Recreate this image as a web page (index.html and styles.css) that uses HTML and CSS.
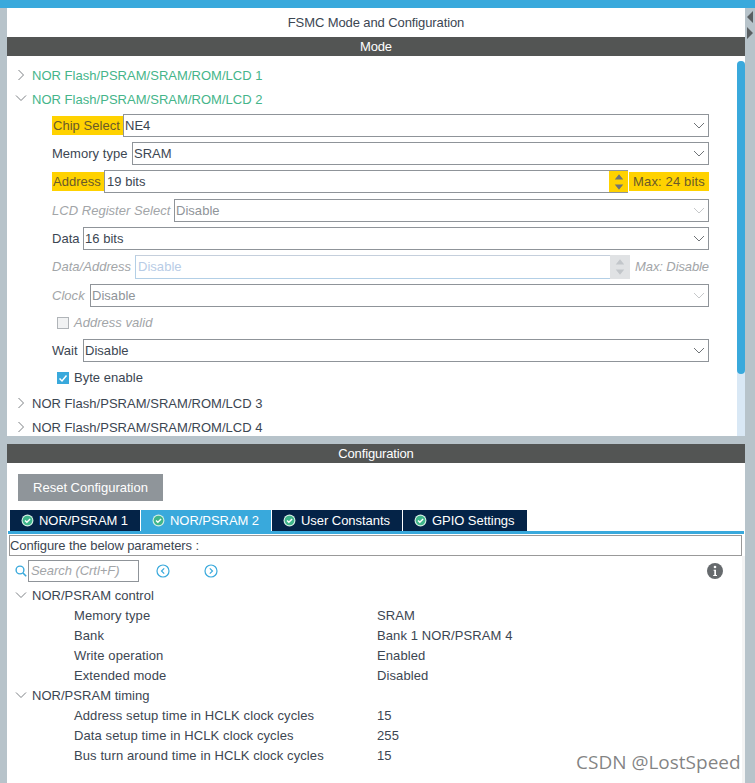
FILE: index.html
```html
<!DOCTYPE html>
<html lang="en">
<head>
<meta charset="utf-8">
<title>FSMC Mode and Configuration</title>
<link rel="stylesheet" href="styles.css">
</head>
<body>
<svg class="defs" width="0" height="0" aria-hidden="true">
  <symbol id="right" viewBox="0 0 8 12"><path d="M1.500 1l5 5-5 5" fill="none" stroke="#7d8185" stroke-width="1"/></symbol>
  <symbol id="down" viewBox="0 0 12 8"><path d="M1 1.500l5 5 5-5" fill="none" stroke="#7d8185" stroke-width="1"/></symbol>
  <symbol id="chev" viewBox="0 0 12 7"><path d="M1 1l5 5 5-5" fill="none" stroke="currentColor" stroke-width="1"/></symbol>
  <symbol id="ok" viewBox="0 0 14 14"><circle cx="7" cy="7" r="6.400" fill="#d5efe4"/><circle cx="7" cy="7" r="5.200" fill="#3fb68b"/><path d="M4.300 7l2 2 3.500-3.600" fill="none" stroke="#fff" stroke-width="1.500"/></symbol>
  <symbol id="spin" viewBox="0 0 12 20"><path d="M6 1l5 6H1zM1 13h10l-5 6z" fill="currentColor"/></symbol>
</svg>
<div class="topbar"></div>
<div class="splitter">
  <svg viewBox="0 0 8 30" width="8" height="30"><path d="M7 2v12L1 8zM1 18v12l6-6z" fill="#5a5f62"/></svg>
</div>
<main class="panel">
  <h1 class="title">FSMC Mode and Configuration</h1>
  <h2 class="bar">Mode</h2>
  <section class="mode">
    <div class="mode-body">
      <div class="node first green"><svg class="arrow-r"><use href="#right"/></svg>NOR Flash/PSRAM/SRAM/ROM/LCD 1</div>
      <div class="node green"><svg class="arrow-d"><use href="#down"/></svg>NOR Flash/PSRAM/SRAM/ROM/LCD 2</div>
      <div class="form">
        <div class="row"><span class="label hl w-chip">Chip Select</span><div class="select"><span class="val">NE4</span><svg class="chev"><use href="#chev"/></svg></div></div>
        <div class="row"><span class="label w-mem">Memory type</span><div class="select"><span class="val">SRAM</span><svg class="chev"><use href="#chev"/></svg></div></div>
        <div class="row"><span class="label hl w-addr">Address</span><div class="input"><span class="val">19 bits</span><div class="spinner hl"><svg class="spin"><use href="#spin"/></svg></div></div><span class="max hl">Max: 24 bits</span></div>
        <div class="row tall"><span class="label off w-lcd">LCD Register Select</span><div class="select"><span class="val off-val">Disable</span><svg class="chev faint"><use href="#chev"/></svg></div></div>
        <div class="row"><span class="label w-data">Data</span><div class="select"><span class="val">16 bits</span><svg class="chev"><use href="#chev"/></svg></div></div>
        <div class="row"><span class="label off w-da">Data/Address</span><div class="input dis"><span class="val dis-val">Disable</span><div class="spinner grey"><svg class="spin"><use href="#spin"/></svg></div></div><span class="max off max-off">Max: Disable</span></div>
        <div class="row tall"><span class="label off w-clk">Clock</span><div class="select"><span class="val off-val">Disable</span><svg class="chev faint"><use href="#chev"/></svg></div></div>
        <div class="check off-check"><span class="box"></span><span class="off">Address valid</span></div>
        <div class="row wait"><span class="label w-data">Wait</span><div class="select"><span class="val">Disable</span><svg class="chev"><use href="#chev"/></svg></div></div>
        <div class="check on-check"><span class="box on"><svg viewBox="0 0 12 12" width="12" height="12"><path d="M2.500 6.500l2.500 2.500 4.500-5.500" fill="none" stroke="#fff" stroke-width="1.500"/></svg></span><span>Byte enable</span></div>
      </div>
      <div class="node n3"><svg class="arrow-r"><use href="#right"/></svg>NOR Flash/PSRAM/SRAM/ROM/LCD 3</div>
      <div class="node"><svg class="arrow-r"><use href="#right"/></svg>NOR Flash/PSRAM/SRAM/ROM/LCD 4</div>
    </div>
    <div class="scrollbar"><div class="thumb"></div></div>
  </section>
  <div class="gap"></div>
  <h2 class="bar">Configuration</h2>
  <section class="config">
    <button class="reset" type="button">Reset Configuration</button>
    <div class="tabs">
      <div class="tab t1"><svg class="ok"><use href="#ok"/></svg>NOR/PSRAM 1</div>
      <div class="tab t1 active"><svg class="ok"><use href="#ok"/></svg>NOR/PSRAM 2</div>
      <div class="tab t1"><svg class="ok"><use href="#ok"/></svg>User Constants</div>
      <div class="tab t4"><svg class="ok"><use href="#ok"/></svg>GPIO Settings</div>
    </div>
    <div class="tabline"></div>
    <div class="params">Configure the below parameters :</div>
    <div class="tabbody">
      <div class="search">
        <svg class="mag" viewBox="0 0 12 12" width="12" height="12"><circle cx="5" cy="5" r="3.900" fill="none" stroke="#39a9dc" stroke-width="1.400"/><path d="M8 8l3.200 3.200" stroke="#39a9dc" stroke-width="1.600"/></svg>
        <div class="search-box">Search (Crtl+F)</div>
        <svg class="nav first-nav" viewBox="0 0 14 14" width="14" height="14"><circle cx="7" cy="7" r="6" fill="none" stroke="#39a9dc" stroke-width="1.200"/><path d="M8.200 4.300L5.500 7l2.700 2.700" fill="none" stroke="#39a9dc" stroke-width="1.200"/></svg>
        <svg class="nav" viewBox="0 0 14 14" width="14" height="14"><circle cx="7" cy="7" r="6" fill="none" stroke="#39a9dc" stroke-width="1.200"/><path d="M5.800 4.300L8.500 7l-2.700 2.700" fill="none" stroke="#39a9dc" stroke-width="1.200"/></svg>
        <svg class="info" viewBox="0 0 16 16" width="16" height="16"><circle cx="8" cy="8" r="8" fill="#666a6d"/><circle cx="8" cy="4" r="1.300" fill="#fff"/><path d="M6.600 6.700h2.400v5.200h1v1.100H6.200v-1.100h1.100V7.800H6.600z" fill="#fff"/></svg>
      </div>
      <div class="ptree">
        <div class="phead"><svg class="arrow-d"><use href="#down"/></svg>NOR/PSRAM control</div>
        <div class="pitem"><span class="pk">Memory type</span><span>SRAM</span></div>
        <div class="pitem"><span class="pk">Bank</span><span>Bank 1 NOR/PSRAM 4</span></div>
        <div class="pitem"><span class="pk">Write operation</span><span>Enabled</span></div>
        <div class="pitem"><span class="pk">Extended mode</span><span>Disabled</span></div>
        <div class="phead"><svg class="arrow-d"><use href="#down"/></svg>NOR/PSRAM timing</div>
        <div class="pitem"><span class="pk">Address setup time in HCLK clock cycles</span><span>15</span></div>
        <div class="pitem"><span class="pk">Data setup time in HCLK clock cycles</span><span>255</span></div>
        <div class="pitem"><span class="pk">Bus turn around time in HCLK clock cycles</span><span>15</span></div>
      </div>
    </div>
  </section>
</main>
<div class="watermark">CSDN @LostSpeed</div>
</body>
</html>
```
FILE: styles.css
```css
* { box-sizing: border-box; }
html, body { margin: 0; height: 783px; overflow: hidden; }
body {
  position: relative;
  background: #b7c3ca;
  font: 13px/16px "Liberation Sans", Arial, sans-serif;
  letter-spacing: 0.03px;
  color: #3c4652;
}
.defs { position: absolute; }
.topbar { height: 8px; background: #39a9dc; }
.splitter { position: absolute; left: 746px; top: 9px; line-height: 0; }
.panel { width: 738px; margin-left: 7px; display: flex; flex-direction: column; height: 775px; }
.title { flex: none; margin: 0; height: 29px; background: #fff; font: inherit; letter-spacing: -0.1px; text-align: center; line-height: 29px; }
.bar { flex: none; margin: 0; height: 19px; background: #535554; color: #fff; font: inherit; letter-spacing: -0.15px; line-height: 19px; text-align: center; }
.mode { flex: none; height: 380px; background: #fff; display: flex; overflow: hidden; }
.mode-body { flex: 1; min-width: 0; padding-left: 10px; }
.scrollbar { width: 8px; margin-top: 5px; background: #d9e8f5; border-radius: 4px 4px 0 0; }
.thumb { height: 313px; background: #39a9dc; border-radius: 4px; }
.node { display: flex; align-items: center; height: 24px; color: #3c4652; position: relative; padding-left: 15px; padding-top: 2px; }
.node.first { margin-top: 7px; }
.node.green { color: #45b58a; }
.node.n3 { margin-top: 5px; }
.arrow-r { position: absolute; left: 0; top: 6px; width: 8px; height: 12px; }
.arrow-d { position: absolute; left: -2px; top: 7px; width: 12px; height: 8px; }
.form { display: flex; flex-direction: column; padding: 3px 0 0 35px; width: 692px; }
.row { display: flex; align-items: center; height: 23px; margin-bottom: 5px; }
.row.tall { margin-top: 1px; }
.label { flex: none; height: 19px; line-height: 19px; white-space: nowrap; }
.w-chip { width: 71px; padding-left: 1px; }
.w-mem { width: 80px; }
.w-addr { width: 52px; padding-left: 1px; }
.w-lcd { width: 122px; }
.w-data { width: 31px; }
.w-da { width: 83px; }
.w-clk { width: 38px; }
.hl { background: #ffd200; color: #6a5a2a; }
.off { color: #a2a5a8; font-style: italic; }
.select, .input { flex: 1; min-width: 0; height: 23px; display: flex; align-items: center; background: #fff; border: 1px solid #8f9499; }
.val { padding-left: 1px; }
.off-val { color: #8f9499; }
.dis-val { color: #b8cce6; }
.chev { width: 12px; height: 7px; margin-left: auto; margin-right: 3px; color: #6f7377; }
.chev.faint { color: #c6c8ca; }
.input { flex: none; width: 524px; border-right: 0; position: relative; }
.input .val { padding-left: 2px; }
.spinner { margin-left: auto; width: 19px; align-self: stretch; display: flex; align-items: center; justify-content: center; color: #6f7377; }
.spin { width: 12px; height: 20px; transform: scale(0.85); }
.spinner.grey { background: #e0e2e4; color: #c2c6ca; }
.max { flex: none; width: 80px; margin-left: 1px; height: 19px; line-height: 19px; text-align: center; letter-spacing: 0.15px; }
.input.dis { width: 475px; height: 24px; border-color: #b3cfe6; border-top-color: #c5cfdc; border-right: 0; }
.input.dis .spinner { width: 20px; margin-right: -20px; margin-top: -1px; margin-bottom: -1px; flex: none; }
.max-off { margin-left: 20px; width: 79px; text-align: right; letter-spacing: -0.1px; }
.check { display: flex; align-items: center; gap: 5px; padding-left: 5px; height: 16px; margin-top: 3px; }
.box { width: 12px; height: 12px; background: #f1f2f3; border: 1px solid #b0b4b8; line-height: 0; }
.box.on { background: #39a9dc; border: 0; }
.wait { margin-top: 8px; }
.gap { flex: none; height: 8px; background: #b7c3ca; }
.config { flex: 1; min-height: 0; background: #fff; position: relative; overflow: hidden; display: flex; flex-direction: column; }
.reset { display: block; flex: none; margin: 11px 0 0 11px; width: 145px; height: 27px; padding: 0; border: 0; background: #8f959a; color: #fff; font: inherit; letter-spacing: 0; }
.tabs { display: flex; flex: none; gap: 1px; margin: 9px 0 0 3px; height: 21px; }
.tab { background: #042347; color: #fff; display: flex; align-items: center; padding-left: 11px; gap: 5px; letter-spacing: -0.05px; }
.t1 { width: 130px; }
.t4 { width: 124px; }
.tab.active { background: #39a9dc; }
.ok { width: 13px; height: 13px; flex: none; }
.tabline { flex: none; height: 3px; margin: 0 1px; background: #39a9dc; }
.params { flex: none; margin: 1px 3px 0 2px; height: 21px; line-height: 19px; border: 1px solid #999; letter-spacing: -0.1px; }
.tabbody { flex: 1; border-right: 3px solid #f4f4f4; }
.search { display: flex; align-items: center; height: 26px; padding-top: 4px; padding-left: 8px; }
.mag { flex: none; }
.search-box { width: 111px; height: 22px; margin-left: 1px; border: 1px solid #8f9499; padding-left: 2px; line-height: 20px; color: #a2a5a8; font-style: italic; letter-spacing: -0.05px; }
.nav { flex: none; }
.first-nav { margin-left: 17px; margin-right: 34px; }
.info { margin-left: auto; margin-right: 19px; flex: none; }
.ptree { margin-top: 4px; padding-left: 10px; }
.phead { position: relative; height: 20px; line-height: 20px; padding-left: 15px; }
.phead .arrow-d { top: 5px; }
.pitem { display: flex; height: 20px; line-height: 20px; padding-left: 57px; letter-spacing: 0.1px; }
.pk { width: 303px; flex: none; }
.watermark { position: absolute; left: 576px; top: 748px; font: 19px/28px "Open Sans", sans-serif; letter-spacing: 0; color: rgba(90,90,90,0.75); white-space: nowrap; }
```
